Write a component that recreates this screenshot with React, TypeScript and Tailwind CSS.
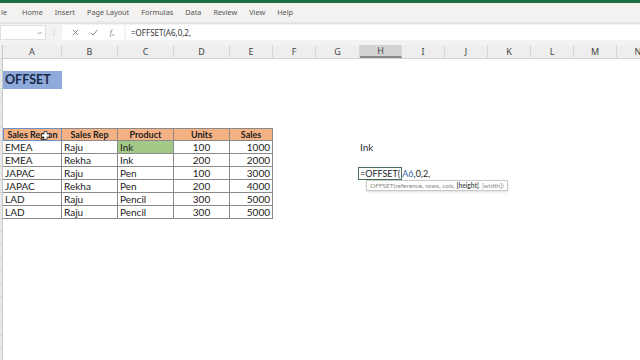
import React from 'react';

const cols = [
  { name: 'A', w: 59 },
  { name: 'B', w: 56 },
  { name: 'C', w: 56 },
  { name: 'D', w: 56 },
  { name: 'E', w: 43 },
  { name: 'F', w: 43 },
  { name: 'G', w: 44 },
  { name: 'H', w: 42 },
  { name: 'I', w: 43 },
  { name: 'J', w: 43 },
  { name: 'K', w: 43 },
  { name: 'L', w: 43 },
  { name: 'M', w: 43 },
  { name: 'N', w: 43 },
];

const tabs = ['Home', 'Insert', 'Page Layout', 'Formulas', 'Data', 'Review', 'View', 'Help'];

const data = [
  ['EMEA', 'Raju', 'Ink', '100', '1000'],
  ['EMEA', 'Rekha', 'Ink', '200', '2000'],
  ['JAPAC', 'Raju', 'Pen', '100', '3000'],
  ['JAPAC', 'Rekha', 'Pen', '200', '4000'],
  ['LAD', 'Raju', 'Pencil', '300', '5000'],
  ['LAD', 'Raju', 'Pencil', '300', '5000'],
];

const font = { fontFamily: 'Lato, "Liberation Sans", sans-serif' };

function RowHead({ h }: { h: string }) {
  return <div className={`w-[3px] shrink-0 bg-[#e9e9e9] border-r border-[#c8c8c8] border-b border-b-[#d4d4d4] ${h}`} />;
}

function TableRow({ row, idx }: { row: string[]; idx: number }) {
  const extra = idx === 0 ? (
    <div className="w-[42px] shrink-0 text-[10px] text-[#333]" style={{ marginLeft: 43 + 44 }}>Ink</div>
  ) : idx === 2 ? (
    <div className="relative shrink-0" style={{ marginLeft: 43 + 44 - 2 }}>
      <div className="w-[44px] h-[13px] border border-[#4a6e57]" />
      <div className="absolute left-[2px] top-[0px] whitespace-nowrap text-[9px] text-[#222]">
        =OFFSET(<span className="ml-[2px] text-[#3465a4]">A6</span>,0,2,
      </div>
      <div className="absolute left-[8px] top-[13px] whitespace-nowrap border border-[#c8c8c8] bg-white px-[3px] h-[11px] leading-[10px] text-[6.5px] text-[#888] shadow-sm">
        OFFSET(reference, rows, cols, <b className="text-[#555]">[height]</b>, [width])
      </div>
    </div>
  ) : null;
  return (
    <div className="flex h-[13px] leading-[13px] text-[10px] text-[#222]">
      <RowHead h="h-[13px]" />
      <div className="flex border-b border-[#8a8a8a]">
        <div className="w-[59px] pl-[2px] border-r border-[#8a8a8a]">{row[0]}</div>
        <div className="w-[56px] pl-[2px] border-r border-[#8a8a8a]">{row[1]}</div>
        <div className={`w-[56px] pl-[2px] border-r border-[#8a8a8a] ${idx === 0 ? 'bg-[#a3c989]' : ''}`}>{row[2]}</div>
        <div className="w-[56px] text-center border-r border-[#8a8a8a]">{row[3]}</div>
        <div className="w-[43px] text-right pr-[2px] border-r border-[#8a8a8a]">{row[4]}</div>
      </div>
      {extra}
    </div>
  );
}

export default function App() {
  const emptyRows = Array.from({ length: 11 });
  return (
    <div className="w-[640px] h-[360px] overflow-hidden bg-white flex flex-col" style={font}>
      <div className="h-[3px] bg-[#1f6e43] shrink-0" />
      <div className="h-[18px] bg-[#f3f2f1] flex items-center shrink-0 text-[7.3px] text-[#555]" style={{ fontFamily: '"Noto Sans", sans-serif' }}>
        <div className="flex gap-[12px] pl-[1px]">
          <span className="mr-[3px]">le</span>
          {tabs.map((t) => (
            <span key={t}>{t}</span>
          ))}
        </div>
      </div>
      <div className="h-[3px] bg-[#ebebeb] shrink-0 border-b border-[#e0e0e0]" />
      <div className="h-[17px] bg-[#f3f3f3] flex items-center shrink-0 text-[8px] text-[#444]" style={{ fontFamily: '"Noto Sans", sans-serif' }}>
        <div className="w-[46px] h-[15px] bg-white border border-[#e0e0e0] flex items-center justify-end pr-[3px]">
          <svg width="5" height="4" viewBox="0 0 5 4"><path d="M0.5 1 L2.5 3 L4.5 1" fill="none" stroke="#888" strokeWidth="0.8" /></svg>
        </div>
        <div className="w-[16px] flex justify-center text-[#bbb] text-[8px]">⁞</div>
        <div className="w-[62px] h-[15px] bg-white flex items-center justify-around px-[4px] text-[#777]">
          <svg width="7" height="7" viewBox="0 0 8 8"><path d="M1 1 L7 7 M7 1 L1 7" stroke="#777" strokeWidth="0.9" /></svg>
          <svg width="8" height="7" viewBox="0 0 8 7"><path d="M0.8 3.8 L3 6 L7.4 1" fill="none" stroke="#777" strokeWidth="0.9" /></svg>
          <span className="italic text-[8px] text-[#777]" style={{ fontFamily: '"Liberation Serif", serif' }}>f<sub className="text-[5px]">x</sub></span>
        </div>
        <div className="flex-1 h-[15px] bg-white ml-[2px] flex items-center pl-[5px] text-[8px] text-[#333]">=OFFSET(A6,0,2,</div>
      </div>
      <div className="h-[4px] bg-[#f3f3f3] shrink-0" />
      <div className="h-[14px] flex shrink-0 bg-[#eeeeee] border-b border-[#d0d0d0] text-[9px] text-[#444]" style={{ fontFamily: '"Noto Sans", sans-serif' }}>
        <div className="w-[3px] shrink-0 border-r border-[#c8c8c8]" />
        {cols.map((c) => (
          <div
            key={c.name}
            className={`shrink-0 flex items-center justify-center border-r border-[#d8d8d8] ${c.name === 'H' ? 'bg-[#d3d3d3] border-b-2 border-b-[#888]' : ''}`}
            style={{ width: c.w }}
          >
            {c.name}
          </div>
        ))}
      </div>
      <div className="flex h-[12px] shrink-0">
        <RowHead h="h-[12px]" />
      </div>
      <div className="flex h-[18px] shrink-0">
        <RowHead h="h-[18px]" />
        <div className="w-[59px] bg-[#8eaadb] text-[12.5px] font-bold text-[#1b2846] leading-[18px] pl-[2px]">OFFSET</div>
      </div>
      {[0, 1, 2].map((i) => (
        <div key={i} className="flex h-[13px] shrink-0">
          <RowHead h="h-[13px]" />
        </div>
      ))}
      <div className="flex h-[13px] leading-[13px] shrink-0 text-[9px] font-bold text-[#222]">
        <RowHead h="h-[13px]" />
        <div className="flex bg-[#f4b183] border-y border-[#8a8a8a]">
          <div className="relative w-[59px] text-center border border-[#6f8fbf] -mt-[1px] h-[13px] leading-[11px] whitespace-nowrap">
            Sales Region
            <svg className="absolute left-[37px] top-[2px]" width="9" height="9" viewBox="0 0 9 9">
              <path d="M3 0.5 H6 V3 H8.5 V6 H6 V8.5 H3 V6 H0.5 V3 H3 Z" fill="white" stroke="#222" strokeWidth="0.7" />
            </svg>
          </div>
          <div className="w-[56px] text-center border-r border-[#8a8a8a] leading-[11px]">Sales Rep</div>
          <div className="w-[56px] text-center border-r border-[#8a8a8a] leading-[11px]">Product</div>
          <div className="w-[56px] text-center border-r border-[#8a8a8a] leading-[11px]">Units</div>
          <div className="w-[43px] text-center border-r border-[#8a8a8a] leading-[11px]">Sales</div>
        </div>
      </div>
      {data.map((r, i) => (
        <TableRow key={i} row={r} idx={i} />
      ))}
      {emptyRows.map((_, i) => (
        <div key={i} className="flex h-[13px] shrink-0">
          <RowHead h="h-[13px]" />
        </div>
      ))}
    </div>
  );
}
